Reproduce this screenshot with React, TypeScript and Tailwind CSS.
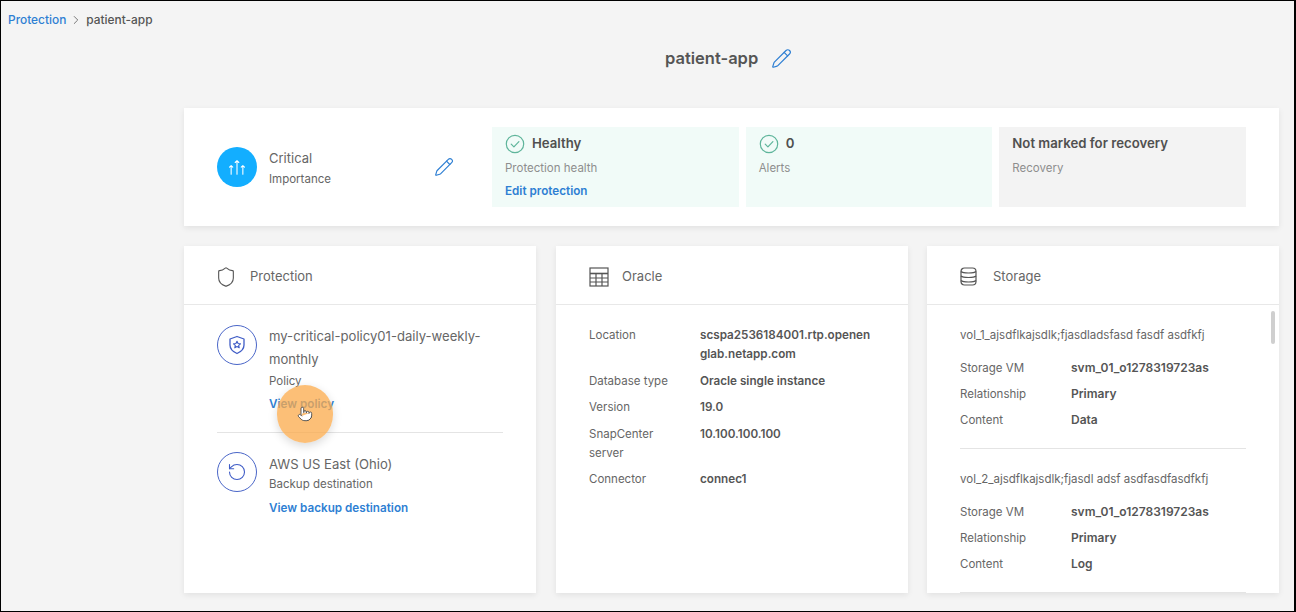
import React from "react";
import { ChevronRight, Pencil, Pointer, RotateCcw, Shield } from "lucide-react";

const font = "font-['Inter','Liberation_Sans',sans-serif]";

function CheckCircle() {
  return (
    <svg width="20" height="20" viewBox="0 0 20 20" fill="none" stroke="#5fb59b" strokeWidth="1.2">
      <circle cx="10" cy="10" r="8.7" />
      <path d="M6.2 10.2l2.7 2.7 5-5.2" strokeLinecap="round" strokeLinejoin="round" />
    </svg>
  );
}

function ArrowsIcon() {
  return (
    <svg width="18" height="18" viewBox="0 0 20 20" fill="none" stroke="#fff" strokeWidth="1.2" strokeLinecap="round" strokeLinejoin="round">
      <path d="M10 18V3M8 5l2-2 2 2" />
      <path d="M3.5 18V8.5M1.7 10.2l1.8-1.8 1.8 1.8" />
      <path d="M16.5 18V8.5M14.7 10.2l1.8-1.8 1.8 1.8" />
    </svg>
  );
}

function TableIcon() {
  return (
    <svg width="20" height="20" viewBox="0 0 20 20" fill="none" stroke="#555" strokeWidth="1.2">
      <rect x="1" y="1" width="18" height="18" />
      <path d="M1 6.5h18" strokeWidth="1.6" />
      <path d="M1 11h18M1 15h18M7 6.5V19M13 6.5V19" />
    </svg>
  );
}

function DbIcon() {
  return (
    <svg width="17" height="19" viewBox="0 0 17 19" fill="none" stroke="#555" strokeWidth="1.2">
      <rect x="1" y="1" width="15" height="17" rx="3.5" />
      <path d="M1 4.5c2 2 13 2 15 0M1 9c2 2 13 2 15 0M1 13.5c2 2 13 2 15 0" />
    </svg>
  );
}

function ShieldStar() {
  return (
    <svg width="18" height="20" viewBox="0 0 18 20" fill="none" stroke="#3f5cc6" strokeWidth="1.3" strokeLinejoin="round">
      <path d="M9 1.5l7 2.5v6c0 4-3 6.8-7 8.5-4-1.700-7-4.500-7-8.500v-6z" />
      <path d="M9 6.300l1.100 2.200 2.400.3-1.800 1.600.5 2.400L9 11.600l-2.200 1.200.5-2.400-1.800-1.600 2.400-.3z" strokeWidth="1.100" />
    </svg>
  );
}

function Tile({ title, sub, link, check, bg }: { title: string; sub: string; link?: string; check?: boolean; bg: string }) {
  return (
    <div className={`flex-1 h-[80px] pl-[13px] pt-[7px] ${bg}`}>
      <div className="flex items-center gap-[7px] h-[20px]">
        {check && <CheckCircle />}
        <span className="text-[13.200px] font-semibold text-[#505050]">{title}</span>
      </div>
      <div className="text-[11.500px] text-[#8e8e8e] mt-[4px] leading-[20px]">{sub}</div>
      {link && <a className="block text-[11.700px] font-semibold text-[#2e7fd3] mt-[3px] leading-[20px]">{link}</a>}
    </div>
  );
}

function PanelHead({ icon, title }: { icon: React.ReactNode; title: string }) {
  return (
    <div className="h-[59px] shrink-0 border-b border-[#e8e8e8] flex items-center pl-[33px] pt-[3px]">
      <div className="w-[33px] flex items-center">{icon}</div>
      <span className="text-[13px] text-[#666]">{title}</span>
    </div>
  );
}

function Volume({ name, content }: { name: string; content: string }) {
  const rows = [
    ["Storage VM", "svm_01_o1278319723as"],
    ["Relationship", "Primary"],
    ["Content", content],
  ];
  return (
    <div className="border-b border-[#e4e4e4] h-[144px] pt-[21px]">
      <div className="text-[11.500px] leading-[18px] text-[#666]">{name}</div>
      <div className="mt-[15px] flex flex-col gap-[8px]">
        {rows.map(([k, v]) => (
          <div key={k} className="flex leading-[18px] text-[11.500px]">
            <span className="w-[111px] text-[#666]">{k}</span>
            <span className="font-semibold text-[#555] text-[12px]">{v}</span>
          </div>
        ))}
      </div>
    </div>
  );
}

export default function App() {
  const oracle = [
    ["Location", "scspa2536184001.rtp.openen glab.netapp.com"],
    ["Database type", "Oracle single instance"],
    ["Version", "19.0"],
    ["SnapCenter server", "10.100.100.100"],
    ["Connector", "connec1"],
  ];

  return (
    <div className={`${font} relative w-[1296px] h-[612px] overflow-hidden bg-[#f4f4f4] border border-black border-r-2`}>
      <div className="h-[37px] flex items-center pl-[7px] text-[11.900px] font-medium">
        <a className="text-[#2e7fd3]">Protection</a>
        <ChevronRight size={14} strokeWidth={1.5} className="text-[#666] mx-[3px]" />
        <span className="text-[#555]">patient-app</span>
      </div>

      <div className="h-[41px] flex items-center pl-[664px]">
        <span className="text-[16.500px] font-semibold text-[#555]">patient-app</span>
        <Pencil size={21} strokeWidth={1.4} className="text-[#2e7fd3] ml-[13px]" />
      </div>

      <div className="ml-[183px] w-[1095px] mt-[29px]">
        <div className="h-[118px] bg-white shadow-[0_2px_6px_rgba(0,0,0,0.08)] flex items-center pl-[33px] pr-[33px]">
          <div className="w-[275px] flex items-center shrink-0">
            <div className="w-[40px] h-[40px] rounded-full bg-[#13aeff] flex items-center justify-center">
              <ArrowsIcon />
            </div>
            <div className="ml-[12px] w-[165px]">
              <div className="text-[13px] text-[#666] leading-[20px] mt-[2px]">Critical</div>
              <div className="text-[11.500px] text-[#666] leading-[20px] mt-[1px]">Importance</div>
            </div>
            <Pencil size={20} strokeWidth={1.4} className="text-[#2e7fd3]" />
          </div>
          <div className="flex-1 flex gap-[7px]">
            <Tile title="Healthy" sub="Protection health" link="Edit protection" check bg="bg-[#f1fbf8]" />
            <Tile title="0" sub="Alerts" check bg="bg-[#f1fbf8]" />
            <Tile title="Not marked for recovery" sub="Recovery" bg="bg-[#f3f3f3]" />
          </div>
        </div>

        <div className="mt-[20px] flex h-[347px]">
          <section className="w-[352px] mr-[20px] bg-white shadow-[0_2px_6px_rgba(0,0,0,0.08)] flex flex-col">
            <PanelHead icon={<Shield size={22} strokeWidth={1.2} className="text-[#555] -ml-[2px]" />} title="Protection" />
            <div className="px-[33px]">
              <div className="flex gap-[12px] pt-[20px] h-[128px] border-b border-[#e4e4e4]">
                <div className="w-[40px] h-[40px] rounded-full border border-[#4a66c8] shrink-0 flex items-center justify-center">
                  <ShieldStar />
                </div>
                <div className="text-[#666]">
                  <div className="text-[13.100px] leading-[23px]">my-critical-policy01-daily-weekly-<br />monthly</div>
                  <div className="text-[11.500px] leading-[20px]">Policy</div>
                  <a className="block text-[11.700px] font-semibold text-[#2e7fd3] leading-[20px] mt-[3px]">View policy</a>
                </div>
              </div>
              <div className="flex gap-[12px] pt-[19px]">
                <div className="w-[40px] h-[40px] rounded-full border border-[#4a66c8] shrink-0 flex items-center justify-center">
                  <RotateCcw size={20} strokeWidth={1.3} className="text-[#3f5cc6]" />
                </div>
                <div className="text-[#666]">
                  <div className="text-[13.100px] leading-[20px] mt-[2px]">AWS US East (Ohio)</div>
                  <div className="text-[11.500px] leading-[20px]">Backup destination</div>
                  <a className="block text-[11.700px] font-semibold text-[#2e7fd3] leading-[20px] mt-[4px]">View backup destination</a>
                </div>
              </div>
            </div>
          </section>

          <section className="w-[352px] mr-[19px] bg-white shadow-[0_2px_6px_rgba(0,0,0,0.08)] flex flex-col">
            <PanelHead icon={<TableIcon />} title="Oracle" />
            <div className="pl-[33px] pr-[30px] pt-[21px] flex flex-col gap-[7.500px]">
              {oracle.map(([k, v]) => (
                <div key={k} className="flex text-[11.500px] leading-[19px]">
                  <span className="w-[111px] pr-[30px] shrink-0 text-[#666]">{k}</span>
                  <span className="font-semibold text-[#555] text-[11.700px]">{v}</span>
                </div>
              ))}
            </div>
          </section>

          <section className="relative w-[352px] bg-white shadow-[0_2px_6px_rgba(0,0,0,0.08)] flex flex-col overflow-hidden">
            <PanelHead icon={<DbIcon />} title="Storage" />
            <div className="px-[33px] overflow-hidden">
              <Volume name="vol_1_ajsdflkajsdlk;fjasdladsfasd fasdf asdfkfj" content="Data" />
              <Volume name="vol_2_ajsdflkajsdlk;fjasdl adsf asdfasdfasdfkfj" content="Log" />
            </div>
            <div className="absolute left-[344px] top-[65px] w-[4px] h-[33px] rounded-full bg-[#cfcfcf]" />
          </section>
        </div>
      </div>

      <div className="absolute left-[276px] top-[384px] w-[56px] h-[58px] rounded-full bg-[#fba94a]/75 shadow-[0_3px_10px_rgba(0,0,0,0.15)] flex items-center justify-center">
        <Pointer size={16} strokeWidth={1.3} fill="#fff" className="text-[#444]" />
      </div>
    </div>
  );
}
